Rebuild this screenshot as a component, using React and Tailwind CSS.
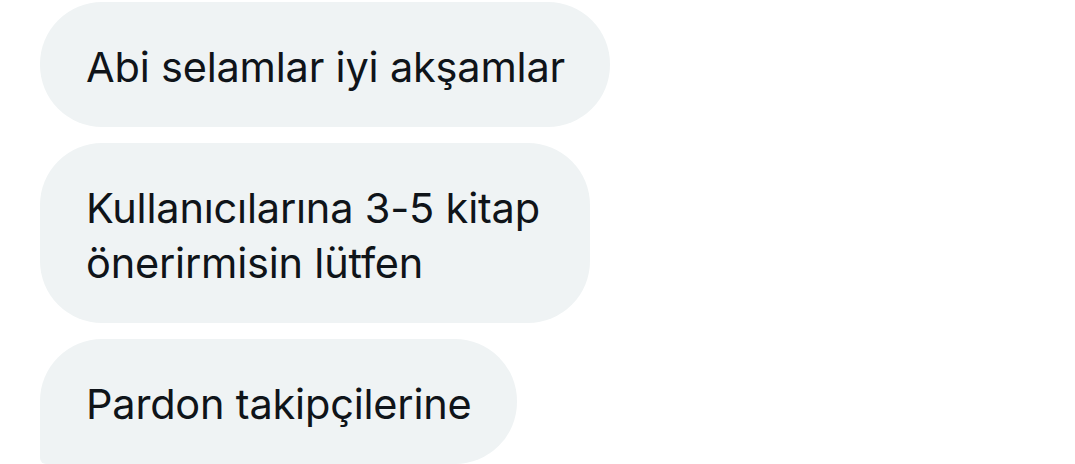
import React from 'react';

const messages = [
    { text: 'Abi selamlar iyi akşamlar', width: 'w-[570px]', corners: 'rounded-[62px]' },
    { text: 'Kullanıcılarına 3-5 kitap önerirmisin lütfen', width: 'w-[550px]', corners: 'rounded-[62px]' },
    { text: 'Pardon takipçilerine', width: 'w-[477px]', corners: 'rounded-t-[62px] rounded-br-[62px] rounded-bl-[6px]' },
];

export default function App() {
    return (
        <div className="w-[1075px] h-[464px] bg-white overflow-hidden pt-[2px] pl-[40px] flex flex-col gap-4 font-['Inter',sans-serif]">
            {messages.map((m, i) => (
                <div
                    key={i}
                    className={`${m.width} ${m.corners} bg-[#eff3f4] pl-[46px] pr-[30px] pt-[38px] pb-[32px] text-[41.5px] leading-[55px] text-[#0f1419] tracking-[-0.2px]`}
                >
                    {m.text}
                </div>
            ))}
        </div>
    );
}
